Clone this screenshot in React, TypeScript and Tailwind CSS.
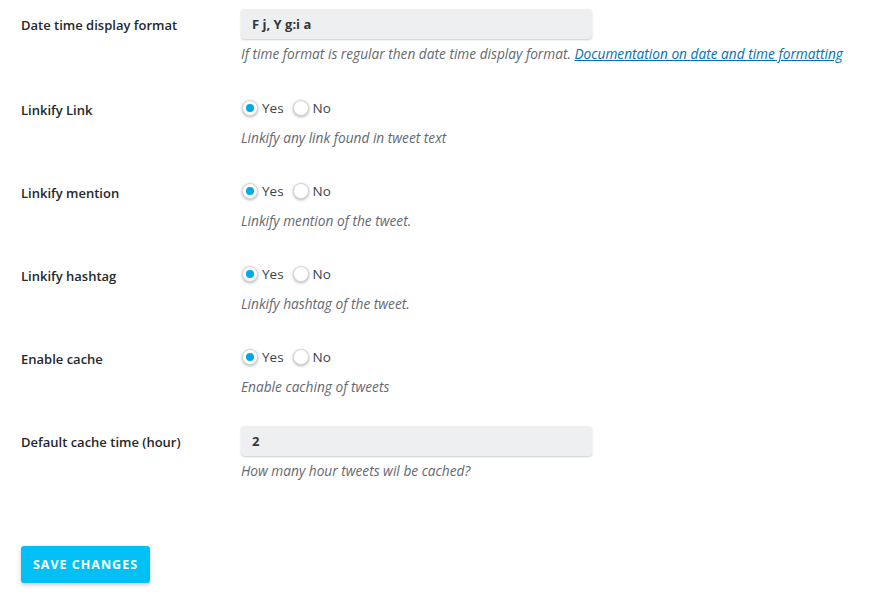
import React from "react";

const font = { fontFamily: '"Open Sans", "Noto Sans", sans-serif' };

function Radio({ checked, label }: { checked?: boolean; label: string }) {
  return (
    <label className="flex items-center gap-[4px]">
      <span className="flex h-[16px] w-[16px] items-center justify-center rounded-full border border-[#d6d6d6] bg-white shadow-[0_1px_3px_rgba(0,0,0,0.3)]">
        {checked && <span className="h-[8px] w-[8px] rounded-full bg-[#00a8e8]" />}
      </span>
      <span className="text-[13.5px] text-[#3c434a]">{label}</span>
    </label>
  );
}

function RadioRow({ label, help, className }: { label: string; help: string; className: string }) {
  return (
    <div className={"flex " + className}>
      <div className="flex h-[22px] w-[241px] items-center pl-[21px] pt-[3px] text-[13px] font-semibold text-[#23282d]">
        {label}
      </div>
      <div>
        <div className="flex h-[20px] items-center gap-[9px] pl-[1px]">
          <Radio checked label="Yes" />
          <Radio label="No" />
        </div>
        <p className="mt-[10px] h-[20px] text-[13.7px] italic leading-[20px] text-[#646970]">{help}</p>
      </div>
    </div>
  );
}

export default function App() {
  return (
    <div className="min-h-[608px] w-[870px] bg-white pt-[9px]" style={font}>
      <div className="flex">
        <div className="flex h-[30px] w-[241px] items-center pl-[21px] pt-[3px] text-[13px] font-semibold text-[#23282d]">
          Date time display format
        </div>
        <div>
          <div className="flex h-[30px] w-[351px] items-center rounded-[4px] bg-[#eeeff1] px-[11px] pt-[1px] text-[13px] font-bold text-[#32373c] shadow-[0_1px_2px_rgba(0,0,0,0.2)]">
            F j, Y g:i a
          </div>
          <p className="mt-[5px] h-[20px] whitespace-nowrap text-[13.7px] italic leading-[20px] text-[#646970]">
            If time format is regular then date time display format.{" "}
            <a className="text-[#0073aa] underline">Documentation on date and time formatting</a>
          </p>
        </div>
      </div>

      <RadioRow className="mt-[34px]" label="Linkify Link" help="Linkify any link found in tweet text" />
      <RadioRow className="mt-[33px]" label="Linkify mention" help="Linkify mention of the tweet." />
      <RadioRow className="mt-[33px]" label="Linkify hashtag" help="Linkify hashtag of the tweet." />
      <RadioRow className="mt-[33px]" label="Enable cache" help="Enable caching of tweets" />

      <div className="mt-[29px] flex">
        <div className="flex h-[30px] w-[241px] items-center pl-[21px] pt-[3px] text-[13px] font-semibold text-[#23282d]">
          Default cache time (hour)
        </div>
        <div>
          <div className="flex h-[30px] w-[351px] items-center rounded-[4px] bg-[#eeeff1] px-[11px] pt-[1px] text-[13px] font-bold text-[#32373c] shadow-[0_1px_2px_rgba(0,0,0,0.2)]">
            2
          </div>
          <p className="mt-[5px] h-[20px] text-[13.7px] italic leading-[20px] text-[#646970]">
            How many hour tweets wil be cached?
          </p>
        </div>
      </div>

      <button className="ml-[21px] mt-[65px] h-[37px] w-[129px] rounded-[3px] bg-[#00c0f6] pt-[2px] text-[12.5px] font-bold uppercase tracking-[0.08em] text-white shadow-[0_2px_4px_rgba(0,0,0,0.2)]">
        Save changes
      </button>
    </div>
  );
}
